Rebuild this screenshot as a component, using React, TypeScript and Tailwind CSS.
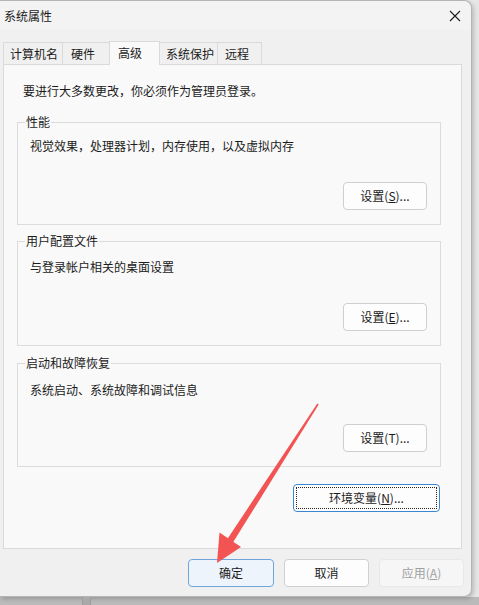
import React from 'react'

const font = { fontFamily: '"Noto Sans CJK SC", "Liberation Sans", sans-serif' }

const Btn = ({ children, extra = '' }: { children: React.ReactNode; extra?: string }) => (
	<button className={`h-[28px] rounded-[4px] border text-[12px] leading-4 ${extra}`}>{children}</button>
)

const Group = ({ title, desc, label, descTop, gap }: { title: string; desc: string; label: React.ReactNode; descTop: string; gap: string }) => (
	<fieldset className="w-[424px] border border-[#dcdcdc] px-0">
		<legend className="ml-[7px] px-[1px] text-[12px] leading-4 text-[#1b1b1b]">{title}</legend>
		<div className={`pl-[12px] ${descTop} text-[12px] leading-4 text-[#1b1b1b]`}>{desc}</div>
		<div className={`flex justify-end pr-[13px] ${gap} pb-[14px]`}>
			<Btn extra="w-[84px] h-[27px] border-[#cfcfcf] bg-[#fdfdfd] text-[#1b1b1b]">{label}</Btn>
		</div>
	</fieldset>
)

const tabs = [
	{ name: '计算机名', w: 'w-[60px] pl-[6px]', first: true },
	{ name: '硬件', w: 'w-[48px] pl-[8px]' },
	{ name: '高级', w: 'w-[51px] pl-[8px]', active: true },
	{ name: '系统保护', w: 'w-[59px] pl-[6px]' },
	{ name: '远程', w: 'w-[45px] pl-[7px]' },
]

export default function App() {
	return (
		<div className="relative w-[479px] h-[605px] overflow-hidden bg-[#e6e6e6]" style={font}>
			<div className="flex h-[597px]">
				<div className="w-[472px] h-[597px] flex flex-col bg-[#f0f0f0] border-t border-r border-b border-[#b4b4b4] rounded-tr-[8px] rounded-br-[8px] shadow-[2px_2px_4px_rgba(0,0,0,0.18)]">
					{/* title bar */}
					<div className="h-[29px] flex items-center justify-between pl-[4px] pr-[10px] bg-[#f3f3f3] rounded-tr-[8px]">
						<span className="text-[12px] leading-4 text-[#1b1b1b]">系统属性</span>
						<svg width="12" height="12" viewBox="0 0 12 12">
							<path d="M1 1 L11 11 M11 1 L1 11" stroke="#1b1b1b" strokeWidth="1.1" />
						</svg>
					</div>

					{/* tabs */}
					<div className="h-[34px] flex items-end pl-[3px]">
						{tabs.map((t) => (
							<div
								key={t.name}
								className={`${t.w} flex items-center text-[12px] leading-4 text-[#1b1b1b] border-t border-l border-r border-[#dadada] ${t.first ? '' : '-ml-px'} ${t.active ? 'h-[24px] bg-[#f9f9f9] -mb-px relative z-10 pb-[2px]' : 'h-[22px] bg-[#f0f0f0]'}`}
							>
								{t.name}
							</div>
						))}
					</div>

					{/* panel */}
					<div className="ml-[3px] w-[459px] h-[485px] border border-[#dadada] bg-[#f9f9f9] px-[13px] pt-[18px] flex flex-col">
						<div className="pl-[6px] text-[12px] leading-4 text-[#1b1b1b]">要进行大多数更改，你必须作为管理员登录。</div>
						<div className="mt-[15px]">
							<Group title="性能" desc="视觉效果，处理器计划，内存使用，以及虚拟内存" descTop="mt-[8px]" gap="mt-[28px]" label={<>设置(<u>S</u>)...</>} />
						</div>
						<div className="mt-[8px]">
							<Group title="用户配置文件" desc="与登录帐户相关的桌面设置" descTop="mt-[10px]" gap="mt-[28px]" label={<>设置(<u>E</u>)...</>} />
						</div>
						<div className="mt-[9px]">
							<Group title="启动和故障恢复" desc="系统启动、系统故障和调试信息" descTop="mt-[11px]" gap="mt-[26px]" label={<>设置(T)...</>} />
						</div>
						<div className="w-[424px] flex justify-end pr-[1px] mt-[17px]">
							<button className="w-[147px] h-[28px] rounded-[4px] border border-[#3d86d1] bg-[#fdfdfd] p-[2px]">
								<div className="w-full h-full border border-dotted border-[#222] flex items-center justify-center text-[12px] leading-4 text-[#1b1b1b]">
									环境变量(<u>N</u>)...
								</div>
							</button>
						</div>
					</div>

					{/* bottom buttons */}
					<div className="flex justify-end gap-[10px] pr-[7px] mt-[10px]">
						<Btn extra="w-[86px] border-[#6fa5da] bg-[#eef4fc] text-[#1b1b1b]">确定</Btn>
						<Btn extra="w-[85px] border-[#d0d0d0] bg-[#fdfdfd] text-[#1b1b1b]">取消</Btn>
						<Btn extra="w-[85px] border-[#e8e8e8] bg-[#f6f6f6] text-[#a0a0a0]">应用(<u>A</u>)</Btn>
					</div>
				</div>
				<div className="flex-1" />
			</div>
			<div className="h-[8px] flex bg-[#bababa]">
				<div className="w-[82px]" />
				<div className="w-[9px] bg-[#a9a9a9] border-x border-[#9c9c9c]" />
			</div>

			{/* annotation arrow */}
			<svg className="absolute left-0 top-0 pointer-events-none" width="479" height="605" viewBox="0 0 479 605">
				<polygon points="317.3,403.6 318.7,404.4 232.8,542.8 227.2,539.2" fill="#f25454" />
				<polygon points="217,563 219.5,532.5 241,547" fill="#f25454" />
			</svg>
		</div>
	)
}
